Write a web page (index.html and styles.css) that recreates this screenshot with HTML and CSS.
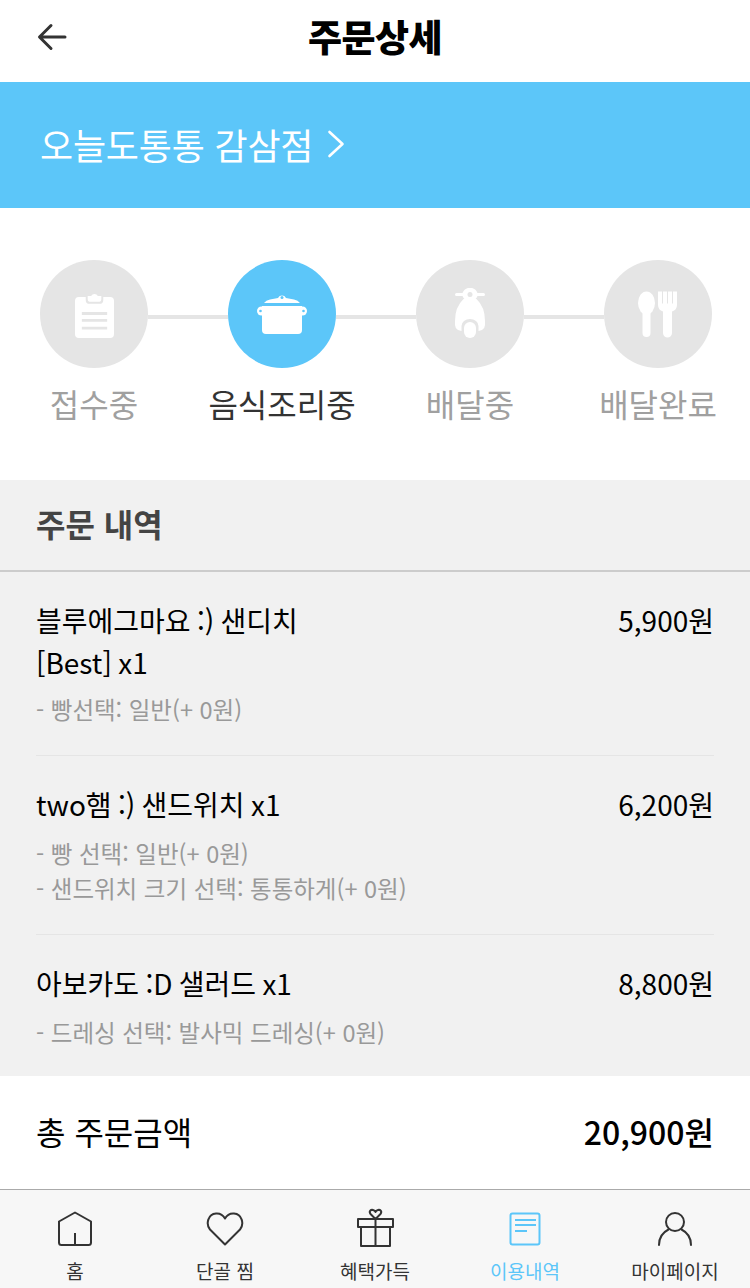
FILE: index.html
```html
<!DOCTYPE html>
<html lang="ko">
<head>
<meta charset="UTF-8">
<meta name="viewport" content="width=device-width, initial-scale=1.0">
<title>주문상세</title>
<link rel="stylesheet" href="styles.css">
</head>
<body>
<header class="top-bar">
    <svg class="back-icon" viewBox="0 0 30 28" width="30" height="28"><path d="M28 14H3M14 2.500 2.500 14 14 25.500" fill="none" stroke="#333" stroke-width="3" stroke-linecap="round" stroke-linejoin="round"/></svg>
    <h1 class="page-title">주문상세</h1>
</header>

<div class="store-banner">
    <span class="store-name">오늘도통통 감삼점</span>
    <svg viewBox="0 0 18 28" width="18" height="28"><path d="M2.500 2 15.500 14 2.500 26" fill="none" stroke="#fff" stroke-width="2.600" stroke-linecap="round" stroke-linejoin="round"/></svg>
</div>

<section class="steps">
    <div class="step">
        <div class="step-circle">
            <svg viewBox="0 0 40 48" width="39" height="47"><path fill="#fff" d="M4 6h7v3a4 4 0 0 0 4 4h10a4 4 0 0 0 4-4V6h7a4 4 0 0 1 4 4v34a4 4 0 0 1-4 4H4a4 4 0 0 1-4-4V10a4 4 0 0 1 4-4z"/><path fill="#fff" d="M13 5h3.500a4 4 0 0 1 7 0H27v3a3 3 0 0 1-3 3H16a3 3 0 0 1-3-3z"/><path d="M7 23h26M7 30h26M7 38h26" stroke="#e5e5e5" stroke-width="3"/></svg>
        </div>
        <span class="step-label">접수중</span>
    </div>
    <div class="step step-active">
        <div class="step-circle">
            <svg viewBox="0 0 50 42" width="50" height="42"><path fill="#fff" d="M5 13h40v24a4 4 0 0 1-4 4H9a4 4 0 0 1-4-4z"/><circle cx="4.500" cy="18" r="4.500" fill="#fff"/><circle cx="45.500" cy="18" r="4.500" fill="#fff"/><circle cx="3.500" cy="18" r="1.300" fill="#5cc6f9"/><circle cx="46.500" cy="18" r="1.300" fill="#5cc6f9"/><path fill="#fff" d="M7 10q2-3 6-3.500l8-1.500a4.500 4.500 0 0 1 8 0l8 1.500q4 .5 6 3.500z"/><circle cx="25" cy="4.500" r="1.500" fill="#5cc6f9"/></svg>
        </div>
        <span class="step-label">음식조리중</span>
    </div>
    <div class="step">
        <div class="step-circle">
            <svg viewBox="0 0 30 52" width="30" height="52"><path fill="#fff" d="M0 6.500Q0 5 1.500 5h6a8 8 0 0 1 15 0h6Q30 5 30 6.500T28.500 8h-6a8 8 0 0 1-15 0h-6Q0 8 0 6.500z"/><circle cx="15" cy="6.500" r="2.500" fill="#e5e5e5"/><path fill="#fff" d="M8.500 11h13Q30 19 30 33v4q0 3-3 5l-3.500 1v-5a8.500 7 0 0 0-17 0v5L3 42q-3-2-3-5v-4Q0 19 8.500 11z"/><rect x="9" y="34" width="12" height="16" rx="6" fill="#fff"/></svg>
        </div>
        <span class="step-label">배달중</span>
    </div>
    <div class="step">
        <div class="step-circle">
            <svg viewBox="0 0 40 48" width="40" height="48"><ellipse cx="8.500" cy="13" rx="8.500" ry="11.500" fill="#fff"/><rect x="4.500" y="19" width="8" height="28" rx="4" fill="#fff"/><path fill="#fff" d="M20 1.500h4v12h1v-12h4v12h1v-12h4v12h1v-12h4V15a7 7 0 0 1-5 6.500V43a4.500 4.500 0 0 1-9 0V21.500A7 7 0 0 1 20 15z"/></svg>
        </div>
        <span class="step-label">배달완료</span>
    </div>
</section>

<section class="order">
    <h2 class="order-title">주문 내역</h2>
    <div class="order-list">
        <div class="order-item">
            <div class="item-row">
                <div class="item-name">블루에그마요 :) 샌디치<br>[Best] x1</div>
                <div class="item-price">5,900원</div>
            </div>
            <div class="item-option">- 빵선택: 일반(+ 0원)</div>
        </div>
        <div class="order-item">
            <div class="item-row">
                <div class="item-name">two햄 :) 샌드위치 x1</div>
                <div class="item-price">6,200원</div>
            </div>
            <div class="item-option">- 빵 선택: 일반(+ 0원)</div>
            <div class="item-option">- 샌드위치 크기 선택: 통통하게(+ 0원)</div>
        </div>
        <div class="order-item">
            <div class="item-row">
                <div class="item-name">아보카도 :D 샐러드 x1</div>
                <div class="item-price">8,800원</div>
            </div>
            <div class="item-option">- 드레싱 선택: 발사믹 드레싱(+ 0원)</div>
        </div>
    </div>
</section>

<div class="total">
    <span class="total-label">총 주문금액</span>
    <span class="total-price">20,900원</span>
</div>

<nav class="tab-bar">
    <a class="tab">
        <svg viewBox="0 0 36 36" width="36" height="36"><path d="M2 10.500 18 1.500l16 9v21a2.500 2.500 0 0 1-2.500 2.500h-27A2.500 2.500 0 0 1 2 31.500zM18 22v12" fill="none" stroke="#333" stroke-width="2" stroke-linejoin="round"/></svg>
        <span>홈</span>
    </a>
    <a class="tab">
        <svg viewBox="0 0 38 36" width="38" height="36"><path d="M19 33.500 4 18.500C-.5 13 2 3 10 2.500q6-.5 9 5 3-5.500 9-5C36 3 38.500 13 34 18.500z" fill="none" stroke="#333" stroke-width="2" stroke-linejoin="round"/></svg>
        <span>단골 찜</span>
    </a>
    <a class="tab">
        <svg class="gift-icon" viewBox="0 0 36 36" width="36" height="36"><path d="M1 8h35v8H1zM4 16v19h29V16M18.500 8v27M18.500 8l-5-5C11.500 0 14-1.500 16-1q2 .5 2.500 2 .5-1.500 2.500-2c2-.5 4.500 1 2.500 4z" fill="none" stroke="#333" stroke-width="2" stroke-linejoin="round"/></svg>
        <span>혜택가득</span>
    </a>
    <a class="tab tab-active">
        <svg viewBox="0 0 32 34" width="32" height="34"><rect x="1.500" y="1.500" width="29" height="31" rx="2" fill="none" stroke="#5cc6f9" stroke-width="2"/><path d="M6 8h21M6 13h21M6 19h12" stroke="#5cc6f9" stroke-width="2"/></svg>
        <span>이용내역</span>
    </a>
    <a class="tab">
        <svg viewBox="0 0 36 36" width="36" height="36"><circle cx="18" cy="11" r="9" fill="none" stroke="#333" stroke-width="2"/><path d="M2 34c0-8 4.500-13 9.500-15.500M34 34c0-8-4.500-13-9.500-15.500" fill="none" stroke="#333" stroke-width="2" stroke-linecap="round"/></svg>
        <span>마이페이지</span>
    </a>
</nav>
</body>
</html>
```

FILE: styles.css
```css
* {
    box-sizing: border-box;
}
body {
    margin: 0;
    width: 750px;
    height: 1288px;
    overflow: hidden;
    background: #fff;
    font-family: "Noto Sans CJK KR", "Noto Sans", sans-serif;
    color: #000;
}
.top-bar {
    height: 82px;
    padding-bottom: 10px;
    display: flex;
    align-items: center;
    justify-content: center;
    position: relative;
}
.back-icon {
    position: absolute;
    left: 37px;
    top: 23px;
}
.page-title {
    margin: 0;
    font-size: 37px;
    font-weight: 900;
    letter-spacing: -0.5px;
}
.store-banner {
    height: 126px;
    padding: 0 0 2px 40px;
    display: flex;
    align-items: center;
    gap: 14px;
    background-color: #5cc6f9;
    color: #fff;
}
.store-name {
    font-size: 36px;
    letter-spacing: -0.2px;
}
.steps {
    height: 272px;
    padding: 52px 0 0 40px;
    display: flex;
    gap: 80px;
}
.step {
    width: 108px;
    display: flex;
    flex-direction: column;
    align-items: center;
    position: relative;
}
.step:not(:last-child)::after {
    content: "";
    position: absolute;
    left: 108px;
    top: 55px;
    width: 80px;
    height: 4px;
    background-color: #e5e5e5;
}
.step-circle {
    width: 108px;
    height: 108px;
    flex: none;
    border-radius: 50%;
    background-color: #e5e5e5;
    display: flex;
    align-items: center;
    justify-content: center;
}
.step-label {
    margin-top: 11px;
    font-size: 32px;
    line-height: 48px;
    white-space: nowrap;
    color: #a0a0a0;
}
.step-active .step-circle {
    background-color: #5cc6f9;
}
.step-active .step-label {
    color: #333;
}
.order {
    background-color: #f1f1f1;
    height: 596px;
}
.order-title {
    margin: 0;
    height: 92px;
    padding-left: 36px;
    font-size: 32px;
    font-weight: 700;
    line-height: 86px;
    color: #444;
    border-bottom: 2px solid #ccc;
}
.order-list {
    padding: 0 36px;
}
.order-item {
    padding: 27px 0;
    border-bottom: 1px solid #e5e5e5;
}
.order-item:last-child {
    border-bottom: none;
}
.item-row {
    display: flex;
    justify-content: space-between;
    min-height: 44px;
}
.item-name {
    font-size: 28px;
    line-height: 42px;
    word-spacing: -1.5px;
}
.item-price {
    font-size: 28px;
    line-height: 42px;
}
.item-option {
    font-size: 23.5px;
    line-height: 35.5px;
    color: #999;
}
.item-row + .item-option {
    margin-top: 9px;
}
.total {
    height: 113px;
    padding: 0 36px 4px;
    display: flex;
    align-items: center;
    justify-content: space-between;
}
.total-label {
    font-size: 32px;
}
.total-price {
    font-size: 32px;
    font-weight: 500;
}
.tab-bar {
    height: 99px;
    display: flex;
    background-color: #f7f7f7;
    border-top: 1px solid #aaa;
}
.tab {
    flex: 1;
    display: flex;
    flex-direction: column;
    align-items: center;
    padding-top: 21px;
    font-size: 19px;
    color: #333;
}
.tab svg {
    height: 36px;
    flex: none;
}
.tab .gift-icon {
    overflow: visible;
}
.tab span {
    margin-top: 10px;
    line-height: 28px;
}
.tab-active {
    color: #5cc6f9;
}
```
